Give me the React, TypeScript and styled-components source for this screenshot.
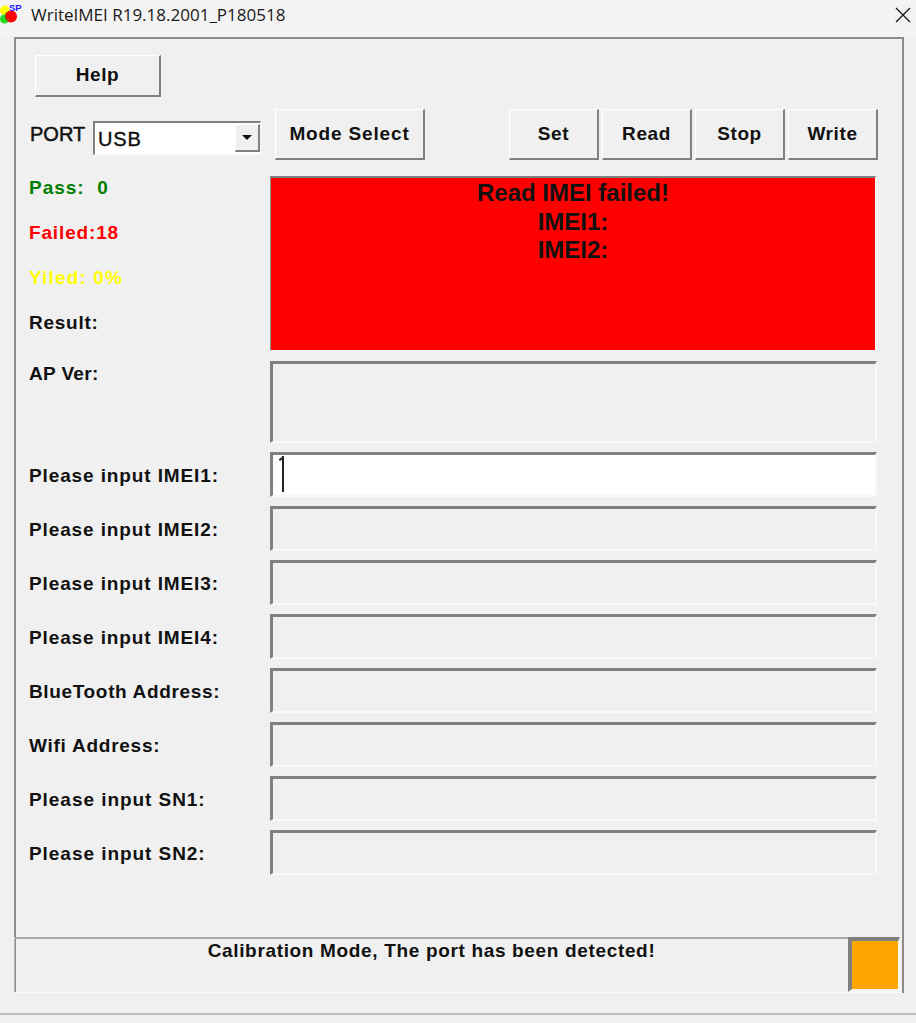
import React from 'react';
import styled, { createGlobalStyle } from 'styled-components';

const GlobalStyle = createGlobalStyle`
  html, body {
    margin: 0;
    padding: 0;
    background: #f0f0f0;
  }
  * {
    box-sizing: border-box;
  }
`;

const Window = styled.div`
  width: 916px;
  height: 1023px;
  background: #f0f0f0;
  display: flex;
  flex-direction: column;
  overflow: hidden;
  font-family: 'Liberation Sans', Arial, sans-serif;
  color: #111;
`;

const TitleBar = styled.div`
  height: 37px;
  flex: none;
  background: #f3f3f3;
  display: flex;
  align-items: center;
  padding: 0 5px 8px 0;
`;

const TitleText = styled.span`
  font-family: 'Open Sans', sans-serif;
  font-size: 17px;
  margin-left: 8px;
  color: #1a1a1a;
`;

const CloseIcon = styled.svg`
  width: 16px;
  height: 16px;
  margin-left: auto;
  stroke: #111;
  stroke-width: 1.2;
`;

const Panel = styled.div`
  width: 890px;
  height: 956px;
  margin-left: 14px;
  flex: none;
  display: flex;
  flex-direction: column;
  border-top: 2px solid #8c8c8c;
  border-left: 2px solid #8c8c8c;
  border-right: 2px solid #8c8c8c;
`;

const Content = styled.div`
  flex: 1;
  padding: 16px 24px 0 13px;
`;

const RaisedButton = styled.button<{ $width: number; $height: number }>`
  width: ${(p) => p.$width}px;
  height: ${(p) => p.$height}px;
  flex: none;
  padding: 0;
  background: #f0f0f0;
  font-family: 'Liberation Sans', Arial, sans-serif;
  font-size: 19px;
  font-weight: 700;
  letter-spacing: 0.6px;
  color: #111;
  border-style: solid;
  border-width: 1px 2px 2px 1px;
  border-color: #ffffff #808080 #808080 #ffffff;
`;

const HelpButton = styled(RaisedButton)`
  margin-left: 6px;
  padding-bottom: 2px;
  display: block;
`;

const TopRow = styled.div`
  display: flex;
  align-items: center;
  height: 51px;
  margin-top: 12px;
`;

const PortLabel = styled.span`
  width: 64px;
  flex: none;
  font-size: 20px;
  letter-spacing: 0;
  padding-left: 1px;
  -webkit-text-stroke: 0.5px #111;
  margin-top: -1px;
`;

const Combo = styled.div`
  width: 168px;
  height: 34px;
  margin-top: 6px;
  flex: none;
  display: flex;
  background: #fff;
  border-style: solid;
  border-width: 2px 1px 1px 2px;
  border-color: #808080 #f8f8f8 #f8f8f8 #808080;
`;

const ComboValue = styled.span`
  flex: 1;
  font-size: 20px;
  letter-spacing: 0.8px;
  line-height: 32px;
  padding-left: 3px;
  -webkit-text-stroke: 0.4px #111;
`;

const ComboArrow = styled.span`
  width: 25px;
  margin: 1px 0 2px;
  background: #f0f0f0;
  border-style: solid;
  border-width: 1px 2px 2px 1px;
  border-color: #ffffff #808080 #808080 #ffffff;
  display: flex;
  align-items: center;
  justify-content: center;

  &::after {
    content: '';
    border-style: solid;
    border-width: 5px 5px 0;
    border-color: #111 transparent transparent;
  }
`;

const ModeButton = styled(RaisedButton)`
  margin-left: 14px;
  letter-spacing: 0.85px;
`;

const ActionGroup = styled.div`
  margin-left: auto;
  display: flex;
  gap: 3px;
`;

const FormGrid = styled.div`
  margin-top: 16px;
  display: grid;
  grid-template-columns: 241px 607px;
  row-gap: 9px;
`;

const StatsColumn = styled.div`
  display: flex;
  flex-direction: column;
  gap: 21px;
`;

const FieldLabel = styled.div<{ $color?: string; $center?: boolean; $spacing?: number }>`
  font-size: 19px;
  font-weight: 700;
  letter-spacing: ${(p) => p.$spacing ?? 0.6}px;
  line-height: 24px;
  color: ${(p) => p.$color || '#111'};
  align-self: ${(p) => (p.$center ? 'center' : 'start')};
  padding-top: ${(p) => (p.$center ? 2 : 0)}px;
`;

const ApLabel = styled(FieldLabel)`
  padding-top: 1px;
`;

const Sunken = styled.div<{ $height: number; $bg?: string }>`
  height: ${(p) => p.$height}px;
  background: ${(p) => p.$bg || '#f0f0f0'};
  border-style: solid;
  border-width: 3px 2px 2px 3px;
  border-color: #808080 #f8f8f8 #f8f8f8 #808080;
  position: relative;
`;

const ResultBox = styled.div`
  height: 175px;
  width: 606px;
  margin-bottom: 1px;
  background: #ff0000;
  border-style: solid;
  border-width: 2px 1px 1px 1px;
  border-color: #808080 #f8f8f8 #f8f8f8 #909090;
  text-align: center;
  font-size: 24px;
  font-weight: 700;
  line-height: 28.5px;
  padding-top: 1px;
  color: #111;
`;

const Caret = styled.span`
  position: absolute;
  left: 9px;
  top: 1px;
  width: 2px;
  height: 36px;
  background: #222;

  &::before {
    content: '';
    position: absolute;
    left: -3px;
    top: 2px;
    width: 4px;
    height: 2px;
    background: #222;
    transform: rotate(-35deg);
  }
`;

const StatusBar = styled.div`
  height: 56px;
  flex: none;
  margin-left: -2px;
  display: flex;
  border-left: 1px solid #b8b8b8;
  border-bottom: 1px solid #fbfbfb;
`;

const StatusText = styled.div`
  flex: 1;
  border-top: 2px solid #a8a8a8;
  text-align: center;
  font-size: 19px;
  font-weight: 700;
  letter-spacing: 0.66px;
  line-height: 24px;
`;

const Lamp = styled.div`
  width: 52px;
  margin-right: 2px;
  flex: none;
  background: #ffa500;
  border-style: solid;
  border-width: 4px 2px 3px 4px;
  border-color: #808080 #f8f8f8 #f8f8f8 #808080;
`;

const BottomEdge = styled.div`
  height: 2px;
  margin-top: 20px;
  flex: none;
  background: #bdbdbd;
`;

const actions = ['Set', 'Read', 'Stop', 'Write'];

const fields = [
  { label: 'Please input IMEI2:', spacing: 0.88 },
  { label: 'Please input IMEI3:', spacing: 0.88 },
  { label: 'Please input IMEI4:', spacing: 0.88 },
  { label: 'BlueTooth Address:', spacing: 0.65 },
  { label: 'Wifi Address:', spacing: 0.75 },
  { label: 'Please input SN1:', spacing: 0.95 },
  { label: 'Please input SN2:', spacing: 0.95 },
];

const AppLogo = () => (
  <svg width="23" height="24" viewBox="0 0 23 24" style={{ flex: 'none' }}>
    <circle cx="5" cy="7.5" r="5" fill="#ffff00" />
    <circle cx="4.5" cy="16" r="4.5" fill="#22dd22" />
    <circle cx="11" cy="13.5" r="6" fill="#ff0000" />
    <path d="M7 9a5 5 0 0 0 0 8l2-1" fill="none" stroke="#2f9a2f" strokeWidth="0.8" />
    <text x="9" y="7.5" fontFamily="Liberation Sans" fontSize="9.5" fontWeight="700" fill="#1a1aff">
      SP
    </text>
  </svg>
);

export default function App() {
  return (
    <Window>
      <GlobalStyle />
      <TitleBar>
        <AppLogo />
        <TitleText>WriteIMEI R19.18.2001_P180518</TitleText>
        <CloseIcon viewBox="0 0 16 16">
          <path d="M1 1 15 15M15 1 1 15" />
        </CloseIcon>
      </TitleBar>
      <Panel>
        <Content>
          <HelpButton $width={126} $height={42}>
            Help
          </HelpButton>
          <TopRow>
            <PortLabel>PORT</PortLabel>
            <Combo>
              <ComboValue>USB</ComboValue>
              <ComboArrow />
            </Combo>
            <ModeButton $width={150} $height={51}>
              Mode Select
            </ModeButton>
            <ActionGroup>
              {actions.map((a) => (
                <RaisedButton key={a} $width={90} $height={51}>
                  {a}
                </RaisedButton>
              ))}
            </ActionGroup>
          </TopRow>
          <FormGrid>
            <StatsColumn>
              <FieldLabel $color="#008000" $spacing={1}>Pass:&nbsp; 0</FieldLabel>
              <FieldLabel $color="#ff0000" $spacing={0.85}>Failed:18</FieldLabel>
              <FieldLabel $color="#ffff00" $spacing={1.15}>Yiled: 0%</FieldLabel>
              <FieldLabel $spacing={0.75}>Result:</FieldLabel>
            </StatsColumn>
            <ResultBox>
              Read IMEI failed!
              <br />
              IMEI1:
              <br />
              IMEI2:
            </ResultBox>
            <ApLabel $spacing={0.35}>AP Ver:</ApLabel>
            <Sunken $height={82} />
            <FieldLabel $center $spacing={0.88}>Please input IMEI1:</FieldLabel>
            <Sunken $height={45} $bg="#ffffff">
              <Caret />
            </Sunken>
            {fields.map((f) => (
              <React.Fragment key={f.label}>
                <FieldLabel $center $spacing={f.spacing}>{f.label}</FieldLabel>
                <Sunken $height={45} />
              </React.Fragment>
            ))}
          </FormGrid>
        </Content>
        <StatusBar>
          <StatusText>Calibration Mode, The port has been detected!</StatusText>
          <Lamp />
        </StatusBar>
      </Panel>
      <BottomEdge />
    </Window>
  );
}
